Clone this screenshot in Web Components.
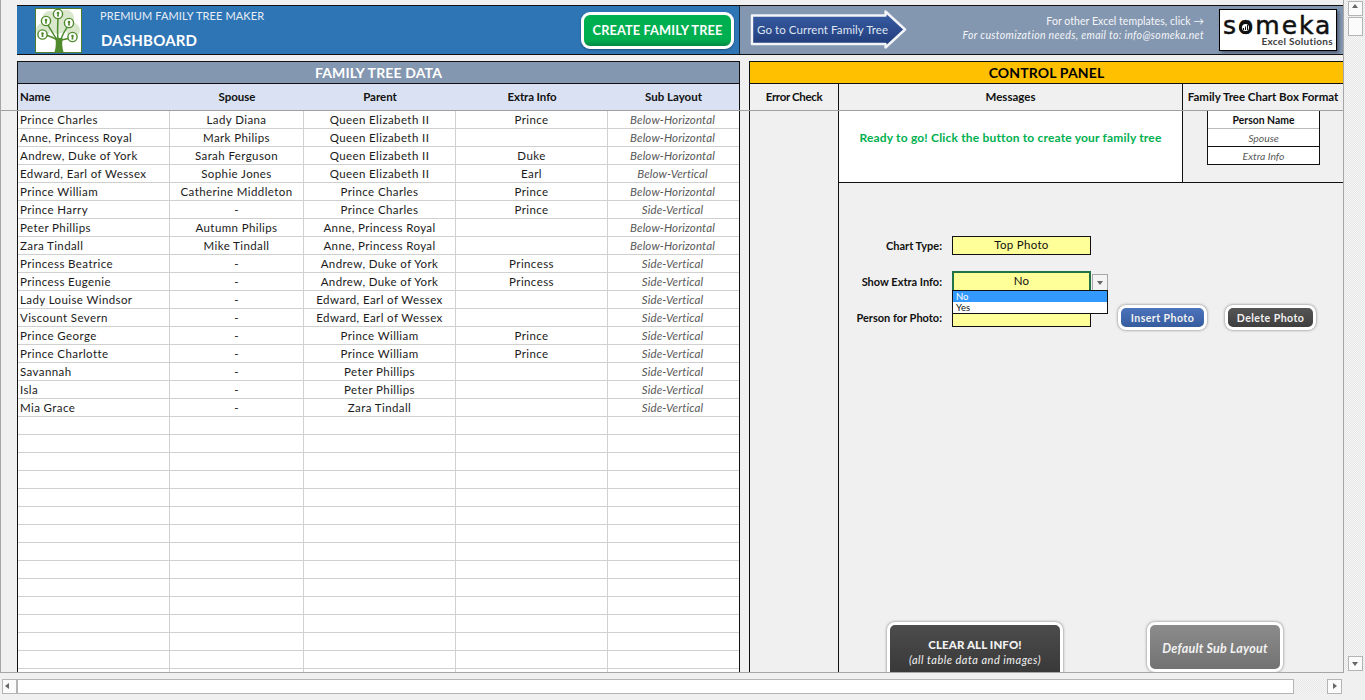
<!DOCTYPE html>
<html lang="en">
  <head>
    <meta charset="UTF-8" />
    <title>Premium Family Tree Maker</title>
    <style>
      html, body { margin: 0; height: 100%; overflow: hidden; background: #f0f0f0; }
      body { font-family: Lato, "Liberation Sans", sans-serif; font-size: 11.5px; color: #111; }
    </style>
  </head>
  <body>
    <ft-app>
      <ft-banner slot="banner"></ft-banner>
      <ft-data-head slot="data-head"></ft-data-head>
      <ft-control-head slot="control-head"></ft-control-head>
      <ft-data-rows slot="data-rows"></ft-data-rows>
      <ft-control-body slot="control-body"></ft-control-body>
    </ft-app>

    <script>
      class FtApp extends HTMLElement {
        constructor() {
          super();
          this.attachShadow({ mode: "open" });
        }
        connectedCallback() {
          this.shadowRoot.innerHTML = `
            <style>
              :host { display: grid; grid-template-columns: 1344px 21px; grid-template-rows: 673px 27px; width: 1365px; height: 700px; overflow: hidden; }
              .sheet { display: flex; flex-direction: column; border-left: 1px solid #a6a6a6; border-right: 1px solid #a6a6a6; border-bottom: 1px solid #a6a6a6; overflow: hidden; }
              .top { height: 105px; padding: 5px 0 0 16px; border-bottom: 1px solid #a0a0a0; display: grid; grid-template-columns: 723px 594px; column-gap: 9px; grid-template-rows: 50px 49px; row-gap: 6px; flex: none; }
              ::slotted([slot="banner"]) { grid-column: 1 / 3; }
              .bottom { height: 561px; padding-left: 16px; display: grid; grid-template-columns: 723px 594px; column-gap: 9px; overflow: hidden; flex: none; }
              .hbar { padding-top: 6px; grid-column: 1 / 3; }
            </style>
            <div class="sheet">
              <div class="top">
                <slot name="banner"></slot>
                <slot name="data-head"></slot>
                <slot name="control-head"></slot>
              </div>
              <div class="bottom">
                <slot name="data-rows"></slot>
                <slot name="control-body"></slot>
              </div>
            </div>
            <ft-vscroll></ft-vscroll>
            <div class="hbar"><ft-hscroll></ft-hscroll></div>
          `;
        }
      }

      class FtBanner extends HTMLElement {
        constructor() {
          super();
          this.attachShadow({ mode: "open" });
        }
        connectedCallback() {
          this.shadowRoot.innerHTML = `
            <style>
              :host { display: grid; grid-template-columns: 723px 1fr; width: 1326px; height: 50px; box-sizing: border-box; border-top: 1px solid #111; border-bottom: 1px solid #111; }
              .left { background: #2e75b6; border-right: 1px solid #1a2a3a; display: flex; align-items: center; padding-left: 18px; color: #fff; height: 48px; box-sizing: border-box; }
              .titles { margin-left: 18px; display: flex; flex-direction: column; }
              .sup { font-size: 11px; color: #e6edf5; line-height: 14px; margin-top: -3px; letter-spacing: .12px; }
              .main { font-size: 15px; font-weight: 700; line-height: 18px; margin: 8px 0 0 1px; letter-spacing: .2px; }
              ft-create { margin-left: auto; margin-right: 5px; }
              .right { background: #8497b0; display: flex; align-items: center; padding-left: 10px; color: #fff; height: 48px; width: 603px; box-sizing: border-box; }
              .note { margin: -5px 0 0 auto; text-align: right; font-size: 10.5px; line-height: 14px; color: #f4f6f9; padding-right: 15px; letter-spacing: .06px; }
              .note i { display: block; letter-spacing: .34px; }
            </style>
            <div class="left">
              <ft-tree-logo></ft-tree-logo>
              <div class="titles">
                <span class="sup">PREMIUM FAMILY TREE MAKER</span>
                <span class="main">DASHBOARD</span>
              </div>
              <ft-create>CREATE FAMILY TREE</ft-create>
            </div>
            <div class="right">
              <ft-arrow>Go to Current Family Tree</ft-arrow>
              <div class="note">
                For other Excel templates, click →
                <i>For customization needs, email to: info@someka.net</i>
              </div>
              <ft-someka></ft-someka>
            </div>
          `;
        }
      }

      class FtTreeLogo extends HTMLElement {
        constructor() {
          super();
          this.attachShadow({ mode: "open" });
        }
        connectedCallback() {
          const nodes = [[22, 5], [10, 12], [33, 14], [6.500, 25.500], [36.500, 28]];
          const circles = nodes.map(([x, y]) => `
            <circle cx="${x}" cy="${y}" r="4.6" fill="#fff" stroke="#4f8a2d" stroke-width="1.4"/>
            <circle cx="${x}" cy="${y - 1}" r="1.3" fill="#4f8a2d"/>
            <path d="M${x - 1} ${y + 2.6}h2l-.4-3h-1.2z" fill="#4f8a2d"/>`).join("");
          this.shadowRoot.innerHTML = `
            <style>
              :host { display: block; width: 47px; height: 45px; flex: none; box-sizing: border-box; border: 1px solid #4f7f2b; background: #fff; }
              svg { display: block; }
            </style>
            <svg width="45" height="43" viewBox="0 0 45 43">
              <g fill="#d9e8cd">
                <circle cx="14" cy="10" r="8"/><circle cx="30" cy="9" r="8"/><circle cx="7" cy="21" r="7"/>
                <circle cx="37" cy="21" r="7"/><circle cx="22" cy="15" r="10"/>
              </g>
              <path d="M18.500 43c1.500-5 1.500-9 1-14h7c-.5 5-.5 9 1 14z" fill="#4f8a2d"/>
              <path d="M22 30C21 22 22 14 22 8M21 30C17 26 15 20 11 15M25 30C27 24 30 20 32 17M21 31C17 28 13 27 9 26M26 31C29 30 32 30 34 29" stroke="#4f8a2d" stroke-width="1.500" fill="none"/>
              ${circles}
            </svg>
          `;
        }
      }

      class FtCreate extends HTMLElement {
        constructor() {
          super();
          this.attachShadow({ mode: "open" });
        }
        connectedCallback() {
          this.shadowRoot.innerHTML = `
            <style>
              :host { display: flex; align-items: center; justify-content: center; width: 153px; height: 37px; box-sizing: border-box; border: 3px solid #fff; border-radius: 9px; background: linear-gradient(#00b050 78%, #048a42); color: #fff; font-weight: 700; font-size: 12.8px; letter-spacing: .1px; box-shadow: 0 1px 2px rgba(0,0,0,.35); }
            </style>
            <slot></slot>
          `;
        }
      }

      class FtArrow extends HTMLElement {
        constructor() {
          super();
          this.attachShadow({ mode: "open" });
        }
        connectedCallback() {
          this.shadowRoot.innerHTML = `
            <style>
              :host { display: block; position: relative; width: 157px; height: 40px; flex: none; color: #dfe6f2; font-size: 11.5px; line-height: 40px; letter-spacing: .08px; }
              svg { position: absolute; left: 0; top: 0; }
              span { position: relative; padding-left: 7px; }
            </style>
            <svg width="157" height="40" viewBox="0 0 157 40">
              <defs><linearGradient id="g" x1="0" y1="0" x2="0" y2="1"><stop offset="0" stop-color="#3a5ea5"/><stop offset="1" stop-color="#1f3a78"/></linearGradient></defs>
              <path d="M2 5.500H135.500V1.500L155 19.500 135.500 37.500V34H2z" fill="url(#g)" stroke="#f2f4f8" stroke-width="2.400" stroke-linejoin="round"/>
            </svg>
            <span><slot></slot></span>
          `;
        }
      }

      class FtSomeka extends HTMLElement {
        constructor() {
          super();
          this.attachShadow({ mode: "open" });
        }
        connectedCallback() {
          this.shadowRoot.innerHTML = `
            <style>
              :host { display: block; position: relative; width: 118px; height: 42px; flex: none; box-sizing: border-box; margin-right: 6px; border: 1px solid #000; background: #fff; box-shadow: 2px 2px 3px rgba(40,50,70,.55); color: #111; text-align: right; }
              .word { display: block; font-family: "DejaVu Sans", sans-serif; font-size: 25px; line-height: 26px; letter-spacing: 2px; margin: 3px 0 0 3px; text-align: left; -webkit-text-stroke: .5px #111; white-space: nowrap; }
              .sub { display: block; font-weight: 700; font-size: 10px; line-height: 11px; padding-right: 3px; letter-spacing: .3px; color: #404040; margin-top: -3px; }
              .o { position: absolute; left: 19px; top: 11px; width: 13px; height: 13px; border-radius: 50%; background: #fff; border: 3px solid #111; box-sizing: border-box; }
              svg { position: absolute; left: 1px; top: 1px; }
            </style>
            <span class="word">someka</span>
            <span class="sub">Excel Solutions</span>
            <span class="o"><svg width="5" height="5" viewBox="0 0 5 5"><path d="M0 3h1v2H0zM2 1.500h1V5H2zM4 0h1v5H4z" fill="#111"/></svg></span>
          `;
        }
      }

      const COLS = "152px 134px 152px 152px 131px";

      class FtDataHead extends HTMLElement {
        constructor() {
          super();
          this.attachShadow({ mode: "open" });
        }
        connectedCallback() {
          this.shadowRoot.innerHTML = `
            <style>
              :host { display: flex; flex-direction: column; box-sizing: border-box; border-left: 1px solid #111; border-right: 1px solid #111; border-top: 1px solid #111; height: 49px; }
              .title { height: 21px; background: #8497b0; color: #fff; font-weight: 700; font-size: 14px; line-height: 21px; text-align: center; border-bottom: 1px solid #111; letter-spacing: .15px; }
              .cols { flex: 1; display: grid; grid-template-columns: ${COLS}; background: #dae1f3; font-weight: 700; align-items: center; text-align: center; padding-bottom: 2px; }
              .cols span:first-child { text-align: left; padding-left: 2px; }
            </style>
            <div class="title">FAMILY TREE DATA</div>
            <div class="cols">
              <span>Name</span><span>Spouse</span><span>Parent</span><span style="letter-spacing:-.1px">Extra Info</span><span>Sub Layout</span>
            </div>
          `;
        }
      }

      class FtControlHead extends HTMLElement {
        constructor() {
          super();
          this.attachShadow({ mode: "open" });
        }
        connectedCallback() {
          this.shadowRoot.innerHTML = `
            <style>
              :host { display: flex; flex-direction: column; box-sizing: border-box; border-left: 1px solid #111; border-top: 1px solid #111; height: 49px; }
              .title { height: 21px; background: #ffc000; color: #000; font-weight: 700; font-size: 14px; line-height: 21px; text-align: center; border-bottom: 1px solid #111; letter-spacing: .15px; }
              .cols { flex: 1; display: grid; grid-template-columns: 89px 344px 1fr; background: #f0f0f0; font-weight: 700; align-items: stretch; text-align: center; }
              .cols span { display: flex; align-items: center; justify-content: center; box-sizing: border-box; border-right: 1px solid #111; padding-bottom: 2px; }
              .cols span:first-child { letter-spacing: -.35px; }
              .cols span:last-child { border-right: 0; white-space: nowrap; }
            </style>
            <div class="title">CONTROL PANEL</div>
            <div class="cols">
              <span>Error Check</span><span>Messages</span><span>Family Tree Chart Box Format</span>
            </div>
          `;
        }
      }

      const QE = "Queen Elizabeth II", BH = "Below-Horizontal", BV = "Below-Vertical", SV = "Side-Vertical";
      const PEOPLE = [
        ["Prince Charles", "Lady Diana", QE, "Prince", BH],
        ["Anne, Princess Royal", "Mark Philips", QE, "", BH],
        ["Andrew, Duke of York", "Sarah Ferguson", QE, "Duke", BH],
        ["Edward, Earl of Wessex", "Sophie Jones", QE, "Earl", BV],
        ["Prince William", "Catherine Middleton", "Prince Charles", "Prince", BH],
        ["Prince Harry", "-", "Prince Charles", "Prince", SV],
        ["Peter Phillips", "Autumn Philips", "Anne, Princess Royal", "", BH],
        ["Zara Tindall", "Mike Tindall", "Anne, Princess Royal", "", BH],
        ["Princess Beatrice", "-", "Andrew, Duke of York", "Princess", SV],
        ["Princess Eugenie", "-", "Andrew, Duke of York", "Princess", SV],
        ["Lady Louise Windsor", "-", "Edward, Earl of Wessex", "", SV],
        ["Viscount Severn", "-", "Edward, Earl of Wessex", "", SV],
        ["Prince George", "-", "Prince William", "Prince", SV],
        ["Prince Charlotte", "-", "Prince William", "Prince", SV],
        ["Savannah", "-", "Peter Phillips", "", SV],
        ["Isla", "-", "Peter Phillips", "", SV],
        ["Mia Grace", "-", "Zara Tindall", "", SV],
      ];

      class FtDataRows extends HTMLElement {
        constructor() {
          super();
          this.attachShadow({ mode: "open" });
        }
        connectedCallback() {
          let cells = "";
          for (let i = 0; i < 32; i++) {
            const row = PEOPLE[i] || ["", "", "", "", ""];
            row.forEach((text, c) => {
              cells += `<div class="c${c}">${text}</div>`;
            });
          }
          this.shadowRoot.innerHTML = `
            <style>
              :host { display: block; box-sizing: border-box; border-left: 1px solid #111; border-right: 1px solid #111; background: #fff; height: 561px; overflow: hidden; }
              .grid { display: grid; grid-template-columns: ${COLS}; grid-auto-rows: 18px; }
              .grid div { box-sizing: border-box; border-right: 1px solid #d0d0d0; border-bottom: 1px solid #d0d0d0; text-align: center; line-height: 17px; white-space: nowrap; letter-spacing: .4px; color: #1a1a1a; }
              .grid .c0 { text-align: left; padding-left: 2px; }
              .grid .c4 { border-right: 0; font-style: italic; color: #595959; letter-spacing: .12px; padding-right: 2px; }
            </style>
            <div class="grid">${cells}</div>
          `;
        }
      }

      class FtControlBody extends HTMLElement {
        constructor() {
          super();
          this.attachShadow({ mode: "open" });
        }
        connectedCallback() {
          this.shadowRoot.innerHTML = `
            <style>
              :host { display: grid; grid-template-columns: 89px 1fr; grid-template-rows: 72px 1fr; box-sizing: border-box; border-left: 1px solid #111; height: 561px; overflow: hidden; }
              .err { grid-row: 1 / 3; border-right: 1px solid #111; }
              .top { display: grid; grid-template-columns: 344px 1fr; border-bottom: 1px solid #111; }
              .msg { background: #fff; border-right: 1px solid #111; color: #00b050; font-weight: 700; font-size: 12px; text-align: center; line-height: 54px; letter-spacing: .18px; }
              .fmt { margin-left: 24px; width: 113px; height: 54px; box-sizing: border-box; border: 1px solid #111; border-top: 0; background: #fff; text-align: center; font-size: 10.4px; }
              .fmt div { height: 18px; box-sizing: border-box; line-height: 18px; font-style: italic; color: #595959; border-bottom: 1px solid #111; }
              .fmt div:first-child { font-weight: 700; font-style: normal; color: #111; border-bottom-color: #bbb; }
              .fmt div:last-child { border-bottom: 0; }
              .form { display: flex; flex-direction: column; padding-top: 53px; box-sizing: border-box; min-height: 0; }
              .rows { display: flex; flex-direction: column; gap: 17px; }
              .row { display: flex; align-items: center; height: 19px; }
              .lab { width: 103px; text-align: right; font-weight: 700; font-size: 11px; margin-right: 10px; flex: none; }
              .insert { margin-left: 27px; }
              .del { margin-left: 18px; }
              .foot { margin-top: auto; height: 50px; display: flex; align-items: flex-start; padding-left: 48px; gap: 84px; }
              .big { line-height: 15px; text-align: center; }
              .big b { display: block; font-size: 11.5px; letter-spacing: .1px; }
              .big i { font-size: 11px; font-weight: 400; letter-spacing: .5px; white-space: nowrap; }
            </style>
            <div class="err"></div>
            <div class="top">
              <div class="msg">Ready to go! Click the button to create your family tree</div>
              <div><div class="fmt"><div>Person Name</div><div>Spouse</div><div>Extra Info</div></div></div>
            </div>
            <div class="form">
              <div class="rows">
                <div class="row"><span class="lab">Chart Type:</span><ft-field>Top Photo</ft-field></div>
                <div class="row"><span class="lab">Show Extra Info:</span><ft-field active>No</ft-field></div>
                <div class="row">
                  <span class="lab">Person for Photo:</span><ft-field></ft-field>
                  <ft-btn class="insert" w="89" h="25" color="#3d68b5">Insert Photo</ft-btn>
                  <ft-btn class="del" w="91" h="25" color="#474747">Delete Photo</ft-btn>
                </div>
              </div>
              <div class="foot">
                <ft-btn w="176" h="61" color="#3d3d3d"><span class="big"><b>CLEAR ALL INFO!</b><i>(all table data and images)</i></span></ft-btn>
                <ft-btn w="136" h="50" color="#828282"><i style="font-weight:700;font-size:12.5px;letter-spacing:.25px;padding-top:2px">Default Sub Layout</i></ft-btn>
              </div>
            </div>
          `;
        }
      }

      class FtField extends HTMLElement {
        constructor() {
          super();
          this.attachShadow({ mode: "open" });
        }
        connectedCallback() {
          const active = this.hasAttribute("active");
          this.shadowRoot.innerHTML = `
            <style>
              :host { display: block; position: relative; width: 139px; height: 19px; flex: none; }
              :host([active]) { height: 20px; align-self: flex-start; margin-top: -1px; }
              .box { box-sizing: border-box; height: 100%; border: 1px solid #111; background: #ffff99; text-align: center; font-size: 11.5px; line-height: 16px; letter-spacing: .3px; }
              :host([active]) .box { border: 2px solid #217346; border-bottom-width: 1px; line-height: 16px; }
              .arrow { position: absolute; left: 140px; top: 3px; width: 16px; height: 17px; box-sizing: border-box; border: 1px solid #a8a8a8; background: #f4f4f4; }
              .arrow::after { content: ""; position: absolute; left: 4px; top: 6px; border: 3.5px solid transparent; border-top: 4px solid #666; border-bottom: 0; }
              .list { position: absolute; left: 0; top: 19px; width: 156px; height: 24px; box-sizing: border-box; border: 1px solid #111; background: #fff; font-size: 9.5px; line-height: 11px; z-index: 2; }
              .list div { height: 11px; padding-left: 3px; }
              .list .sel { background: #3399ff; color: #fff; }
            </style>
            <div class="box"><slot></slot></div>
            ${active ? `<div class="arrow"></div><div class="list"><div class="sel">No</div><div>Yes</div></div>` : ""}
          `;
        }
      }

      class FtBtn extends HTMLElement {
        constructor() {
          super();
          this.attachShadow({ mode: "open" });
        }
        connectedCallback() {
          const w = this.getAttribute("w");
          const h = this.getAttribute("h");
          const color = this.getAttribute("color");
          this.shadowRoot.innerHTML = `
            <style>
              :host { display: flex; align-items: center; justify-content: center; width: ${w}px; height: ${h}px; flex: none; box-sizing: border-box; border: 3px solid #fff; border-radius: 8px; background: ${color}; background-image: linear-gradient(rgba(255,255,255,.08), rgba(0,0,0,.12)); color: #f2f2f2; font-weight: 700; font-size: 10.6px; letter-spacing: .42px; box-shadow: 0 0 3px rgba(0,0,0,.5); position: relative; z-index: 1; }
            </style>
            <slot></slot>
          `;
        }
      }

      const TRACK = "repeating-conic-gradient(#e6e6e6 0 25%, #f7f7f7 0 50%) 0 0 / 2px 2px";
      const SCROLL_BTN = "box-sizing: border-box; width: 15px; height: 15px; border: 1px solid #b4b4b4; background: #fbfbfb; position: relative; flex: none;";

      class FtVscroll extends HTMLElement {
        constructor() {
          super();
          this.attachShadow({ mode: "open" });
        }
        connectedCallback() {
          this.shadowRoot.innerHTML = `
            <style>
              :host { display: flex; flex-direction: column; height: 671px; padding: 1px 2px 0 4px; box-sizing: border-box; width: 21px; background: ${TRACK}; }
              .b { ${SCROLL_BTN} }
              .b::after { content: ""; position: absolute; left: 3px; border: 3.5px solid transparent; }
              .up::after { top: 2px; border-bottom: 4px solid #666; border-top: 0; }
              .dn::after { top: 5px; border-top: 4px solid #666; border-bottom: 0; }
              .thumb { box-sizing: border-box; height: 19px; margin-top: 1px; border: 1px solid #b4b4b4; background: #fbfbfb; flex: none; }
              .dn { margin-top: auto; }
            </style>
            <div class="b up"></div>
            <div class="thumb"></div>
            <div class="b dn"></div>
          `;
        }
      }

      class FtHscroll extends HTMLElement {
        constructor() {
          super();
          this.attachShadow({ mode: "open" });
        }
        connectedCallback() {
          this.shadowRoot.innerHTML = `
            <style>
              :host { display: flex; height: 15px; width: 1340px; margin-left: 2px; background: ${TRACK}; }
              .b { ${SCROLL_BTN} }
              .b::after { content: ""; position: absolute; top: 3px; border: 3.5px solid transparent; }
              .l::after { left: 2px; border-right: 4px solid #666; border-left: 0; }
              .r::after { left: 5px; border-left: 4px solid #666; border-right: 0; }
              .thumb { box-sizing: border-box; width: 1277px; border: 1px solid #b4b4b4; background: #fff; flex: none; }
              .r { margin-left: auto; }
            </style>
            <div class="b l"></div>
            <div class="thumb"></div>
            <div class="b r"></div>
          `;
        }
      }

      // children first, so app slots are already upgraded when it renders
      customElements.define("ft-tree-logo", FtTreeLogo);
      customElements.define("ft-create", FtCreate);
      customElements.define("ft-arrow", FtArrow);
      customElements.define("ft-someka", FtSomeka);
      customElements.define("ft-field", FtField);
      customElements.define("ft-btn", FtBtn);
      customElements.define("ft-vscroll", FtVscroll);
      customElements.define("ft-hscroll", FtHscroll);
      customElements.define("ft-banner", FtBanner);
      customElements.define("ft-data-head", FtDataHead);
      customElements.define("ft-control-head", FtControlHead);
      customElements.define("ft-data-rows", FtDataRows);
      customElements.define("ft-control-body", FtControlBody);
      customElements.define("ft-app", FtApp);
    </script>
  </body>
</html>
